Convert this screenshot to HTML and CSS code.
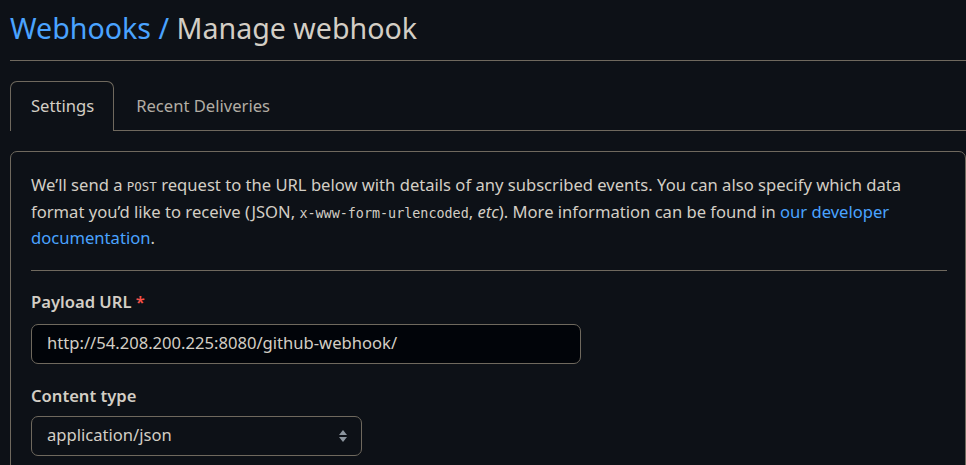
FILE: index.html
```html
<!DOCTYPE html>
<html>
<head>
<meta charset="utf-8">
<link rel="stylesheet" href="styles.css">
</head>
<body>
<div class="page">
  <div class="subhead">
    <h2 class="subhead-heading"><a class="crumb" href="#">Webhooks /</a> Manage webhook</h2>
  </div>
  <nav class="tabnav">
    <a class="tab selected" href="#">Settings</a>
    <a class="tab" href="#">Recent Deliveries</a>
  </nav>
  <div class="box">
    <p class="intro">We’ll send a <code class="post">POST</code> request to the URL below with details of any subscribed events. You can also specify which data format you’d like to receive (JSON, <code>x-www-form-urlencoded</code>, <em>etc</em>). More information can be found in <a href="#" class="link">our developer documentation</a>.</p>
    <hr class="sep">
    <div class="field">
      <label class="label">Payload URL <span class="req">*</span></label>
      <div class="input url">http://54.208.200.225:8080/github-webhook/</div>
    </div>
    <div class="field">
      <label class="label label-tight">Content type</label>
      <div class="input select">
        <span>application/json</span>
        <svg class="arrows" width="10" height="16" viewBox="0 0 10 16"><path d="M5 2 L9 7 H1 Z" fill="#8b949e"/><path d="M5 14 L1 9 H9 Z" fill="#8b949e"/></svg>
      </div>
    </div>
  </div>
</div>
</body>
</html>
```
FILE: styles.css
```css
html, body {
  margin: 0;
  padding: 0;
  background: #0d1117;
  overflow: hidden;
}
body {
  font-family: "Noto Sans", "Open Sans", sans-serif;
  color: #d3cec5;
  font-size: 16.6px;
  line-height: 1.5;
}
.page {
  padding-left: 10px;
  height: 465px;
  overflow: hidden;
}
.subhead {
  border-bottom: 1px solid #6f695e;
  height: 61px;
  box-sizing: border-box;
}
.subhead-heading {
  margin: 0;
  font-weight: 400;
  font-size: 28.6px;
  line-height: 56px;
  color: #d3cec5;
}
.crumb {
  color: #4aa3ff;
  text-decoration: none;
}
.tabnav {
  margin-top: 20px;
  display: flex;
  border-bottom: 1px solid #6f695e;
  height: 50px;
  box-sizing: border-box;
}
.tab {
  display: flex;
  align-items: center;
  padding: 0 21px;
  height: 50px;
  box-sizing: border-box;
  color: #b2ada4;
  text-decoration: none;
  border: 1px solid transparent;
  border-bottom: 0;
  border-radius: 7px 7px 0 0;
}
.tab.selected {
  color: #d3cec5;
  border-color: #6f695e;
  background: #0d1117;
  padding: 0 19px 0 20px;
}
.box {
  margin-top: 20px;
  border: 1px solid #6f695e;
  border-radius: 7px;
  padding: 20px 18px 20px 20px;
}
.intro {
  margin: 0;
  line-height: 26.5px;
}
code {
  font-family: "DejaVu Sans Mono", "Liberation Mono", monospace;
  font-size: 13.4px;
  line-height: 1;
}
.post {
  font-size: 12.5px;
}
.link {
  color: #4aa3ff;
  text-decoration: none;
}
.sep {
  border: 0;
  border-top: 1px solid #6f695e;
  margin: 18px 0 18px;
}
.field {
  margin-bottom: 19px;
}
.label {
  display: block;
  font-weight: 600;
  line-height: 26px;
  margin-bottom: 9px;
}
.label-tight {
  margin-bottom: 7px;
}
.req {
  color: #f85149;
}
.input {
  height: 40px;
  box-sizing: border-box;
  border: 1px solid #6f695e;
  border-radius: 7px;
  padding: 0 15px;
  display: flex;
  align-items: center;
  color: #d3cec5;
}
.url {
  width: 550px;
  background: #010409;
}
.select {
  width: 331px;
  background: #0d1117;
  justify-content: space-between;
  padding-right: 13px;
}
.arrows {
  display: block;
}
```
